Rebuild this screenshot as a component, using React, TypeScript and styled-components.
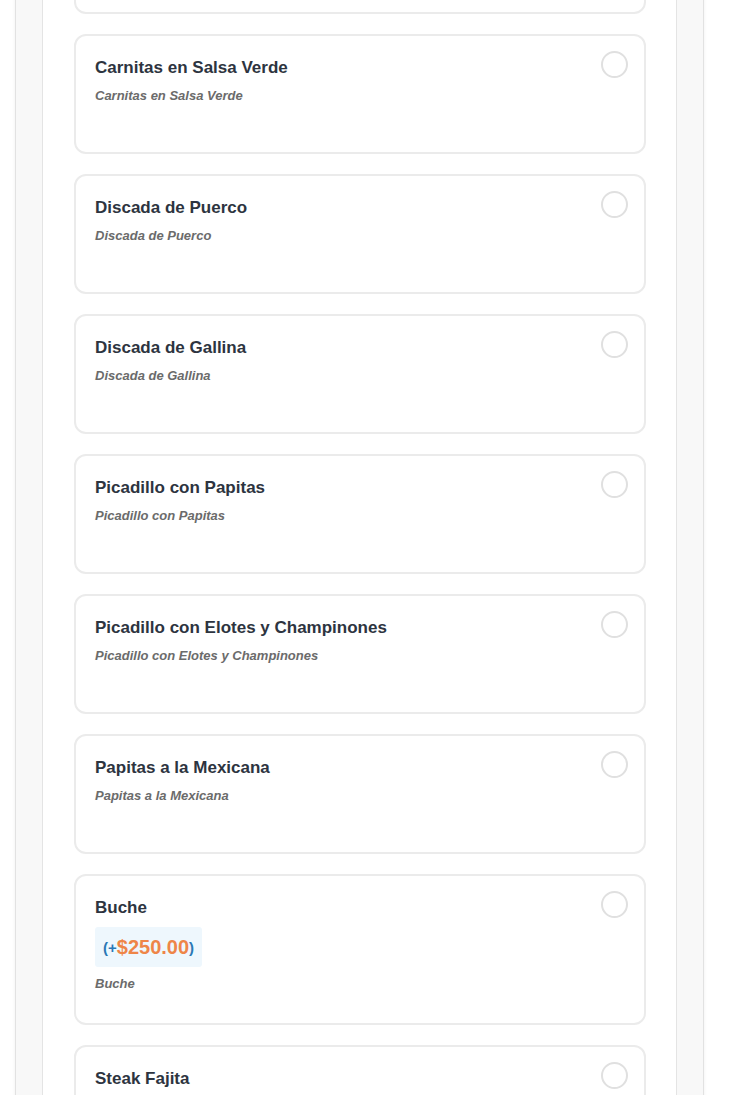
import React from "react";
import styled, { createGlobalStyle } from "styled-components";

const Global = createGlobalStyle`
  html, body { margin: 0; padding: 0; background: #ffffff; }
  body { font-family: "Liberation Sans", Arial, sans-serif; overflow: hidden; }
  * { box-sizing: border-box; }
`;

const Viewport = styled.div`
  width: 730px;
  height: 1095px;
  overflow: hidden;
  background: #ffffff;
`;

const Frame = styled.div`
  margin: -140px 26px 0 15px;
  padding: 0 26px;
  background: #f8f8f8;
  border-left: 1px solid #e2e2e2;
  border-right: 1px solid #e2e2e2;
  box-shadow: 0 0 4px rgba(0, 0, 0, 0.06);
`;

const Panel = styled.div`
  background: #ffffff;
  border-left: 1px solid #e4e4e4;
  border-right: 1px solid #e4e4e4;
  padding: 34px 30px 40px 31px;
  display: flex;
  flex-direction: column;
  gap: 20px;
`;

const Card = styled.div`
  border: 2px solid #ebebeb;
  border-radius: 12px;
  background: #fff;
  min-height: 120px;
  padding: 22px 16px 31px 19px;
  display: flex;
  align-items: flex-start;
  gap: 12px;
`;

const Body = styled.div`
  flex: 1;
  display: flex;
  flex-direction: column;
`;

const Title = styled.div`
  font-size: 17px;
  line-height: 20px;
  font-weight: 700;
  color: #2d3440;
`;

const Sub = styled.div<{ $afterBadge?: boolean }>`
  margin-top: ${(p) => (p.$afterBadge ? "9px" : "10px")};
  font-size: 13px;
  line-height: 16px;
  font-weight: 700;
  font-style: italic;
  color: #6b6b6b;
`;

const Badge = styled.div`
  align-self: flex-start;
  margin-top: 9px;
  background: #eef7fd;
  border-radius: 3px;
  height: 40px;
  padding: 0 8px;
  display: flex;
  align-items: center;
  font-weight: 700;
  color: #2a78b5;
  font-size: 15px;
`;

const Price = styled.span`
  color: #ee8548;
  font-size: 20px;
`;

const Radio = styled.div`
  width: 27px;
  height: 27px;
  border-radius: 50%;
  border: 2px solid #e0e0e0;
  background: #fff;
  margin-top: -7px;
  flex: none;
`;

type Item = { name: string; price?: string };

const items: Item[] = [
  { name: "Carne Asada" },
  { name: "Carnitas en Salsa Verde" },
  { name: "Discada de Puerco" },
  { name: "Discada de Gallina" },
  { name: "Picadillo con Papitas" },
  { name: "Picadillo con Elotes y Champinones" },
  { name: "Papitas a la Mexicana" },
  { name: "Buche", price: "$250.00" },
  { name: "Steak Fajita" },
];

export default function App() {
  return (
    <Viewport>
      <Global />
      <Frame>
        <Panel>
          {items.map((it) => (
            <Card key={it.name}>
              <Body>
                <Title>{it.name}</Title>
                {it.price && (
                  <Badge>
                    (+<Price>{it.price}</Price>)
                  </Badge>
                )}
                <Sub $afterBadge={!!it.price}>{it.name}</Sub>
              </Body>
              <Radio />
            </Card>
          ))}
        </Panel>
      </Frame>
    </Viewport>
  );
}
